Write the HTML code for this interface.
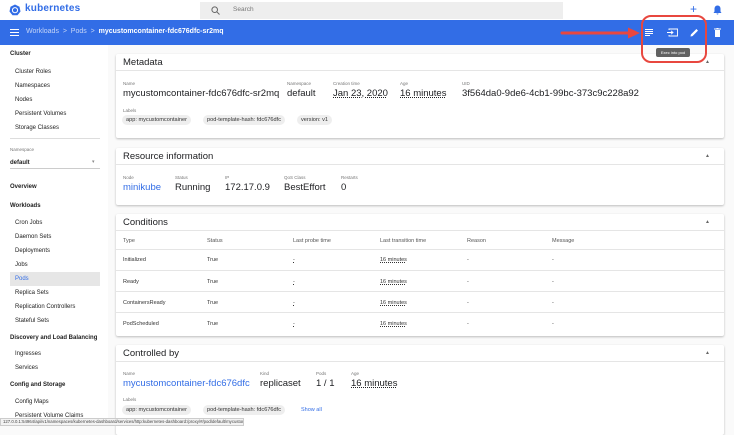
<!DOCTYPE html>
<html><head><style>
*{box-sizing:border-box;margin:0;padding:0}
body{width:734px;height:426px;overflow:hidden;background:#fafafa;font-family:"Liberation Sans",sans-serif;position:relative;color:#202124}
.a{position:absolute;white-space:nowrap}
.top{left:0;top:0;width:734px;height:20px;background:#fff}
.blue{left:0;top:20px;width:734px;height:25px;background:#326de6}
.side{left:0;top:45px;width:108px;height:381px;background:#fff}
.card{position:absolute;left:116px;width:608px;background:#fff;box-shadow:0 1px 2px rgba(0,0,0,.25);border-radius:2px}
.ch{height:17px;border-bottom:1px solid #e5e5e5;font-size:9.5px;padding:3px 7px;color:#202124}
.sl{font-size:6px;color:#222}
.sh{font-size:6px;font-weight:bold;color:#222}
.lb{font-size:4.5px;color:#777}
.v{font-size:9.5px;color:#202124}
.chip{position:absolute;height:10px;background:#eee;border-radius:5px;font-size:5.6px;padding:2px 4px;color:#333;white-space:nowrap;line-height:6px}
.t{font-size:5.5px;color:#333}
.row{position:absolute;left:0;width:608px;border-top:1px solid #e5e5e5}
.u{text-decoration:underline dotted}
.car{position:absolute;left:589px;top:5px;font-size:5px;color:#666}
</style></head><body>
<div class="a top"></div>
<svg class="a" style="left:9px;top:4px" width="12" height="12" viewBox="0 0 12 12"><polygon points="6,0.5 10.5,2.7 11.5,7.5 8.5,11.3 3.5,11.3 0.5,7.5 1.5,2.7" fill="#326de6"/><circle cx="6" cy="6.2" r="2.6" fill="none" stroke="#fff" stroke-width="1"/></svg>
<div class="a" style="left:25px;top:3px;font-size:10px;color:#326de6;font-weight:bold;letter-spacing:.2px">kubernetes</div>
<div class="a" style="left:200px;top:2px;width:363px;height:17px;background:#eee"></div>
<svg class="a" style="left:211px;top:6px" width="9" height="9" viewBox="0 0 9 9"><circle cx="3.7" cy="3.7" r="2.8" fill="none" stroke="#666" stroke-width="1"/><line x1="5.8" y1="5.8" x2="8.5" y2="8.5" stroke="#666" stroke-width="1"/></svg>
<div class="a" style="left:233px;top:6px;font-size:6.5px;color:#777">Search</div>
<div class="a" style="left:690px;top:2px;font-size:12px;color:#326de6">+</div>
<svg class="a" style="left:713px;top:5px" width="9" height="10" viewBox="0 0 9 10"><path d="M4.5 0.5c-2 0-3 1.5-3 3.5v2.5L0.5 8h8L7.5 6.5V4c0-2-1-3.5-3-3.5z M3.5 8.5h2a1 1 0 0 1-2 0z" fill="#326de6"/></svg>
<div class="a blue"></div>
<svg class="a" style="left:10px;top:29px" width="9" height="7" viewBox="0 0 9 7"><path d="M0 .5h9M0 3.5h9M0 6.5h9" stroke="#fff" stroke-width="1.1"/></svg>
<div class="a" style="left:26px;top:28px;font-size:7px;color:#c6d5f7">Workloads &nbsp;&gt;&nbsp; Pods &nbsp;&gt;&nbsp; <b style="color:#fff">mycustomcontainer-fdc676dfc-sr2mq</b></div>
<svg class="a" style="left:645px;top:29px" width="8" height="7" viewBox="0 0 8 7"><path d="M0 .5h8M0 2.5h8M0 4.5h8M0 6.5h5" stroke="#fff" stroke-width=".9"/></svg>
<svg class="a" style="left:667px;top:28px" width="11" height="9" viewBox="0 0 11 9"><path d="M2 2V1h8.5v7H2V7" fill="none" stroke="#fff" stroke-width=".9"/><path d="M0 4.5h6M4 2.8l2 1.7-2 1.7" fill="none" stroke="#fff" stroke-width=".9"/></svg>
<svg class="a" style="left:690px;top:28px" width="9" height="9" viewBox="0 0 9 9"><path d="M0.5 8.5l.4-2 5.5-5.5 1.6 1.6-5.5 5.5z" fill="#fff"/></svg>
<svg class="a" style="left:714px;top:28px" width="7" height="9" viewBox="0 0 7 9"><path d="M0 1h7M2.5 0h2" stroke="#fff" stroke-width="1"/><rect x="1" y="2" width="5" height="7" fill="#fff"/></svg>

<div class="a side"></div>
<div class="a sh" style="left:10px;top:51px">Cluster</div>
<div class="a sl" style="left:15px;top:69px">Cluster Roles</div>
<div class="a sl" style="left:15px;top:83px">Namespaces</div>
<div class="a sl" style="left:15px;top:97px">Nodes</div>
<div class="a sl" style="left:15px;top:111px">Persistent Volumes</div>
<div class="a sl" style="left:15px;top:125px">Storage Classes</div>
<div class="a" style="left:10px;top:138px;width:90px;border-top:1px solid #ddd"></div>
<div class="a lb" style="left:10px;top:147px">Namespace</div>
<div class="a sh" style="left:10px;top:160px">default</div>
<div class="a" style="left:92px;top:159px;font-size:5px;color:#888">▾</div>
<div class="a" style="left:10px;top:168px;width:90px;border-top:1px solid #ccc"></div>
<div class="a sh" style="left:10px;top:184px">Overview</div>
<div class="a sh" style="left:10px;top:203px">Workloads</div>
<div class="a sl" style="left:15px;top:220px">Cron Jobs</div>
<div class="a sl" style="left:15px;top:234px">Daemon Sets</div>
<div class="a sl" style="left:15px;top:248px">Deployments</div>
<div class="a sl" style="left:15px;top:262px">Jobs</div>
<div class="a" style="left:10px;top:272px;width:90px;height:14px;background:#e6e6e6"></div>
<div class="a sl" style="left:15px;top:276px;color:#326de6">Pods</div>
<div class="a sl" style="left:15px;top:290px">Replica Sets</div>
<div class="a sl" style="left:15px;top:304px">Replication Controllers</div>
<div class="a sl" style="left:15px;top:318px">Stateful Sets</div>
<div class="a sh" style="left:10px;top:335px">Discovery and Load Balancing</div>
<div class="a sl" style="left:15px;top:351px">Ingresses</div>
<div class="a sl" style="left:15px;top:365px">Services</div>
<div class="a sh" style="left:10px;top:382px">Config and Storage</div>
<div class="a sl" style="left:15px;top:399px">Config Maps</div>
<div class="a sl" style="left:15px;top:413px">Persistent Volume Claims</div>

<div class="card" style="top:54px;height:84px">
<div class="ch">Metadata</div>
<div class="car">▲</div>
<div class="a lb" style="left:7px;top:27px">Name</div><div class="a v" style="left:7px;top:34px">mycustomcontainer-fdc676dfc-sr2mq</div>
<div class="a lb" style="left:171px;top:27px">Namespace</div><div class="a v" style="left:171px;top:34px">default</div>
<div class="a lb" style="left:217px;top:27px">Creation time</div><div class="a v u" style="left:217px;top:34px">Jan 23, 2020</div>
<div class="a lb" style="left:284px;top:27px">Age</div><div class="a v u" style="left:284px;top:34px">16 minutes</div>
<div class="a lb" style="left:346px;top:27px">UID</div><div class="a v" style="left:346px;top:34px">3f564da0-9de6-4cb1-99bc-373c9c228a92</div>
<div class="a lb" style="left:7px;top:54px">Labels</div>
<div class="chip" style="left:6px;top:61px">app: mycustomcontainer</div>
<div class="chip" style="left:87px;top:61px">pod-template-hash: fdc676dfc</div>
<div class="chip" style="left:181px;top:61px">version: v1</div>
</div>

<div class="card" style="top:148px;height:57px">
<div class="ch">Resource information</div>
<div class="car">▲</div>
<div class="a lb" style="left:7px;top:27px">Node</div><div class="a v" style="left:7px;top:34px;color:#326de6">minikube</div>
<div class="a lb" style="left:59px;top:27px">Status</div><div class="a v" style="left:59px;top:34px">Running</div>
<div class="a lb" style="left:109px;top:27px">IP</div><div class="a v" style="left:109px;top:34px">172.17.0.9</div>
<div class="a lb" style="left:168px;top:27px">QoS Class</div><div class="a v" style="left:168px;top:34px">BestEffort</div>
<div class="a lb" style="left:225px;top:27px">Restarts</div><div class="a v" style="left:225px;top:34px">0</div>
</div>

<div class="card" style="top:214px;height:122px">
<div class="ch">Conditions</div>
<div class="car">▲</div>
<div class="a t" style="left:7px;top:24px;color:#555">Type</div><div class="a t" style="left:91px;top:24px;color:#555">Status</div><div class="a t" style="left:177px;top:24px;color:#555">Last probe time</div><div class="a t" style="left:264px;top:24px;color:#555">Last transition time</div><div class="a t" style="left:351px;top:24px;color:#555">Reason</div><div class="a t" style="left:436px;top:24px;color:#555">Message</div>
<div class="row" style="top:35px"></div>
<div class="a t" style="left:7px;top:43px">Initialized</div><div class="a t" style="left:91px;top:43px">True</div><div class="a t u" style="left:177px;top:43px">-</div><div class="a t u" style="left:264px;top:43px">16 minutes</div><div class="a t" style="left:351px;top:43px">-</div><div class="a t" style="left:436px;top:43px">-</div>
<div class="row" style="top:56px"></div>
<div class="a t" style="left:7px;top:65px">Ready</div><div class="a t" style="left:91px;top:65px">True</div><div class="a t u" style="left:177px;top:65px">-</div><div class="a t u" style="left:264px;top:65px">16 minutes</div><div class="a t" style="left:351px;top:65px">-</div><div class="a t" style="left:436px;top:65px">-</div>
<div class="row" style="top:77px"></div>
<div class="a t" style="left:7px;top:86px">ContainersReady</div><div class="a t" style="left:91px;top:86px">True</div><div class="a t u" style="left:177px;top:86px">-</div><div class="a t u" style="left:264px;top:86px">16 minutes</div><div class="a t" style="left:351px;top:86px">-</div><div class="a t" style="left:436px;top:86px">-</div>
<div class="row" style="top:98px"></div>
<div class="a t" style="left:7px;top:107px">PodScheduled</div><div class="a t" style="left:91px;top:107px">True</div><div class="a t u" style="left:177px;top:107px">-</div><div class="a t u" style="left:264px;top:107px">16 minutes</div><div class="a t" style="left:351px;top:107px">-</div><div class="a t" style="left:436px;top:107px">-</div>
</div>

<div class="card" style="top:345px;height:90px">
<div class="ch">Controlled by</div>
<div class="car">▲</div>
<div class="a lb" style="left:7px;top:26px">Name</div><div class="a v" style="left:7px;top:33px;color:#326de6">mycustomcontainer-fdc676dfc</div>
<div class="a lb" style="left:144px;top:26px">Kind</div><div class="a v" style="left:144px;top:33px">replicaset</div>
<div class="a lb" style="left:200px;top:26px">Pods</div><div class="a v" style="left:200px;top:33px">1 / 1</div>
<div class="a lb" style="left:235px;top:26px">Age</div><div class="a v u" style="left:235px;top:33px">16 minutes</div>
<div class="a lb" style="left:7px;top:52px">Labels</div>
<div class="chip" style="left:6px;top:60px">app: mycustomcontainer</div>
<div class="chip" style="left:87px;top:60px">pod-template-hash: fdc676dfc</div>
<div class="a" style="left:185px;top:62px;font-size:5.5px;color:#326de6">Show all</div>
</div>

<div class="a" style="left:0;top:418px;width:244px;height:8px;background:#f3f3f3;border:1px solid #ccc;font-size:4.3px;color:#444;padding:0 2px;line-height:6px;overflow:hidden;z-index:5">127.0.0.1:54964/api/v1/namespaces/kubernetes-dashboard/services/http:kubernetes-dashboard:/proxy/#/pod/default/mycustomcontainer</div>
<svg class="a" style="left:560px;top:26px;z-index:5" width="84" height="14" viewBox="0 0 84 14"><path d="M2 7h70" stroke="#e8473f" stroke-width="3" stroke-linecap="round"/><path d="M68 1.5l12 5.5-12 5.5z" fill="#e8473f"/></svg>
<div class="a" style="left:641px;top:15px;width:66px;height:48px;border:2.5px solid #e8473f;border-radius:10px;z-index:5"></div>
<div class="a" style="left:656px;top:48px;width:34px;height:9px;background:#616161;border-radius:2px;color:#fff;font-size:4px;text-align:center;line-height:9px;z-index:5">Exec into pod</div>
</body></html>
